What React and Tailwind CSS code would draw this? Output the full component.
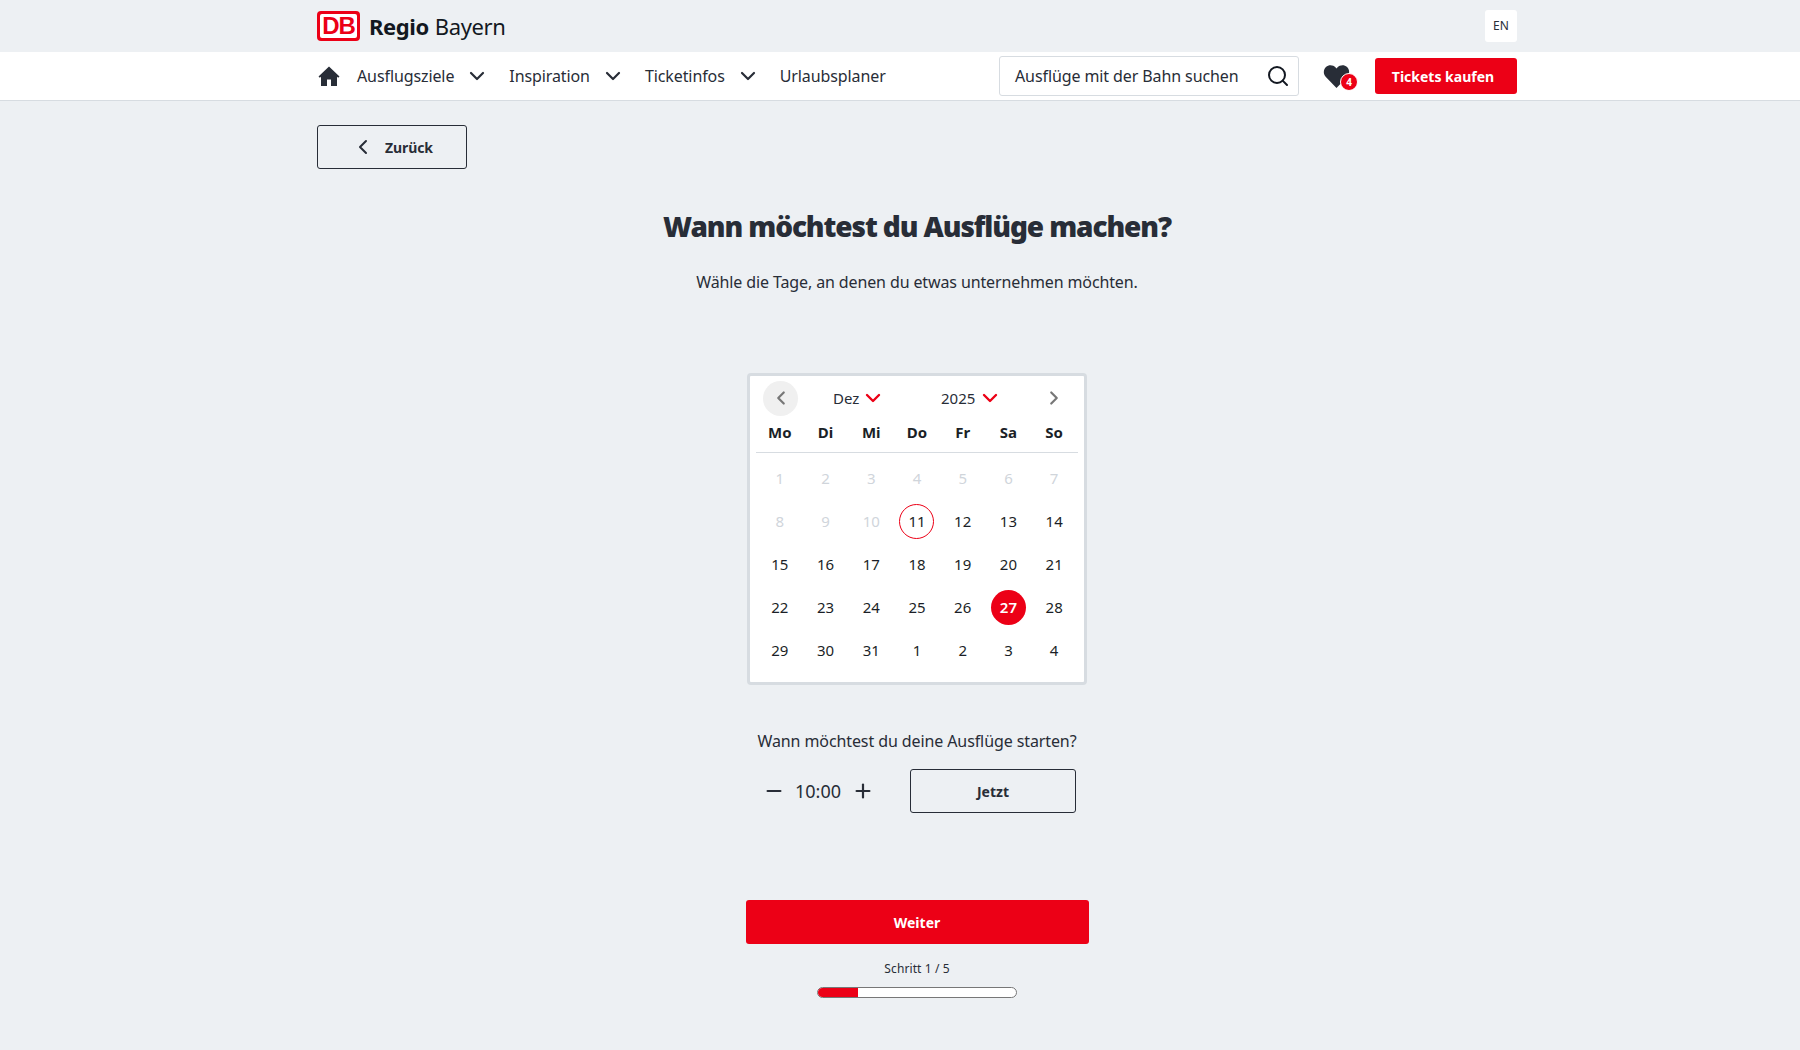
import React from 'react';
import { ChevronLeft, ChevronRight, ChevronDown, Minus, Plus, Search } from 'lucide-react';

const font = "font-['Noto_Sans',sans-serif]";
const weekdays = ['Mo', 'Di', 'Mi', 'Do', 'Fr', 'Sa', 'So'];

const days = [
  [1, 2, 3, 4, 5, 6, 7],
  [8, 9, 10, 11, 12, 13, 14],
  [15, 16, 17, 18, 19, 20, 21],
  [22, 23, 24, 25, 26, 27, 28],
  [29, 30, 31, 1, 2, 3, 4],
];

function DbLogo() {
  return (
    <div className="flex h-[30px] w-[43px] items-center justify-center rounded-[4px] bg-[#ec0016] p-[3px]">
      <div className="flex h-full w-full items-center justify-center rounded-[2px] bg-white">
        <span className="font-['Liberation_Sans',sans-serif] text-[24px] leading-none font-bold tracking-[-1px] text-[#ec0016]">DB</span>
      </div>
    </div>
  );
}

function NavItem({ label, hasMenu }) {
  return (
    <div className="flex items-center">
      <span className="text-[16px] tracking-[-0.1px] text-[#282d37]">{label}</span>
      {hasMenu && <ChevronDown className="ml-[11px] h-[24px] w-[24px] text-[#282d37]" strokeWidth={2.2} />}
    </div>
  );
}

function Calendar() {
  return (
    <div className="h-[312px] w-[340px] rounded-[4px] border-[3px] border-[#d7dce1] bg-white px-[6px] pt-[4px]">
      <div className="flex h-[36px] items-center pl-[7px]">
        <div className="flex h-[35px] w-[35px] items-center justify-center rounded-full bg-[#f0f0f0]">
          <ChevronLeft className="h-[22px] w-[22px] text-[#777]" strokeWidth={2.4} />
        </div>
        <div className="ml-[35px] flex w-[54px] items-center">
          <span className="text-[15px] text-[#282d37]">Dez</span>
          <ChevronDown className="ml-[2px] h-[24px] w-[24px] shrink-0 text-[#ec0016]" strokeWidth={2.4} />
        </div>
        <div className="ml-[54px] flex w-[61px] items-center">
          <span className="text-[15px] text-[#282d37]">2025</span>
          <ChevronDown className="ml-[3px] h-[24px] w-[24px] shrink-0 text-[#ec0016]" strokeWidth={2.4} />
        </div>
        <ChevronRight className="ml-[41px] h-[22px] w-[22px] shrink-0 text-[#777]" strokeWidth={2.4} />
      </div>
      <div className="h-[37px] border-b border-[#d7dce1] px-px pb-[3px]">
        <div className="grid h-full grid-cols-7 items-center">
          {weekdays.map((d) => (
            <div key={d} className="text-center text-[15px] font-bold text-[#1b1f27]">{d}</div>
          ))}
        </div>
      </div>
      <div className="px-px pt-[4px]">
        {days.map((row, r) => (
          <div key={r} className="grid h-[43px] grid-cols-7 items-center">
            {row.map((d, c) => {
              const muted = r === 0 || (r === 1 && c < 3);
              const today = r === 1 && c === 3;
              const picked = r === 3 && c === 5;
              return (
                <div key={c} className="flex justify-center">
                  <div
                    className={`flex h-[35px] w-[35px] items-center justify-center rounded-full text-[15px] ${
                      muted
                        ? 'text-[#d0d5db]'
                        : picked
                          ? 'bg-[#ec0016] font-semibold text-white'
                          : today
                            ? 'border border-[#ec0016] text-[#1b1f27]'
                            : 'text-[#1b1f27]'
                    }`}
                  >
                    {d}
                  </div>
                </div>
              );
            })}
          </div>
        ))}
      </div>
    </div>
  );
}

export default function App() {
  return (
    <div className={`min-h-[1050px] bg-[#edf0f3] ${font}`}>
      <div className="h-[52px]">
        <div className="ml-[317px] flex h-full w-[1200px] items-center justify-between">
          <div className="flex items-center">
            <DbLogo />
            <span className="ml-[9px] text-[22px] leading-none font-bold tracking-[-0.4px] text-[#131821]">Regio</span>
            <span className="ml-[6px] text-[22px] leading-none tracking-[-0.4px] text-[#131821]">Bayern</span>
          </div>
          <div className="flex h-[32px] w-[32px] items-center justify-center rounded-[3px] bg-white text-[12px] text-[#282d37]">EN</div>
        </div>
      </div>

      <div className="h-[49px] border-b border-[#d7dce1] bg-white">
        <div className="ml-[317px] flex h-full w-[1200px] items-center">
          <svg viewBox="0 0 24 24" className="h-[24px] w-[24px] text-[#282d37]" fill="currentColor">
            <path d="M12 2.5 1.5 12.4l1.3 1.4L4 12.7V22h6v-6.5h4V22h6v-9.3l1.2 1.1 1.3-1.4L12 2.5Z" />
          </svg>
          <div className="ml-[16px] flex items-center gap-[20px]">
            <NavItem label="Ausflugsziele" hasMenu />
            <NavItem label="Inspiration" hasMenu />
            <NavItem label="Ticketinfos" hasMenu />
            <NavItem label="Urlaubsplaner" />
          </div>
          <div className="ml-auto flex h-[40px] w-[300px] items-center justify-between rounded-[3px] border border-[#d7dce1] bg-white pr-[8px] pl-[15px]">
            <span className="text-[16px] tracking-[-0.1px] text-[#282d37]">Ausflüge mit der Bahn suchen</span>
            <Search className="h-[24px] w-[24px] text-[#131821]" strokeWidth={2} />
          </div>
          <div className="relative ml-[23px] h-[28px] w-[36px]">
            <svg viewBox="0 0 24 24" className="h-[29px] w-[29px] text-[#282d37]" fill="currentColor">
              <path d="M12 21.5 3.2 12.4C.9 10 1 6.3 3.3 4.1c2.3-2.1 5.9-1.9 8 .5l.7.8.7-.8c2.1-2.4 5.7-2.6 8-.5 2.3 2.2 2.4 5.9.1 8.3L12 21.5Z" />
            </svg>
            <div className="absolute top-[11px] left-[18px] flex h-[18px] w-[18px] items-center justify-center rounded-full border border-white bg-[#ec0016] text-[10px] font-bold text-white">4</div>
          </div>
          <div className="ml-[17px] flex h-[36px] w-[142px] items-center justify-center rounded-[3px] bg-[#ec0016] pr-[6px] text-[14px] font-bold text-white">Tickets kaufen</div>
        </div>
      </div>

      <div className="ml-[317px] flex w-[1200px] flex-col items-center">
        <div className="mt-[24px] flex h-[44px] w-[150px] items-center self-start rounded-[3px] border border-[#282d37] pl-[33px]">
          <ChevronLeft className="h-[24px] w-[24px] text-[#282d37]" strokeWidth={2} />
          <span className="ml-[10px] text-[14px] font-bold tracking-[-0.1px] text-[#282d37]">Zurück</span>
        </div>

        <h1 className="mt-[37px] text-[28px] leading-[40px] font-black tracking-[-1.1px] text-[#282d37]">Wann möchtest du Ausflüge machen?</h1>
        <p className="mt-[24px] text-[16px] leading-[24px] tracking-[-0.12px] text-[#282d37]">Wähle die Tage, an denen du etwas unternehmen möchten.</p>

        <div className="mt-[79px]">
          <Calendar />
        </div>

        <p className="mt-[44px] text-[16px] leading-[24px] tracking-[-0.1px] text-[#282d37]">Wann möchtest du deine Ausflüge starten?</p>

        <div className="mt-[16px] flex w-[318px] items-center">
          <Minus className="ml-[5px] h-[22px] w-[22px] text-[#282d37]" strokeWidth={2.4} />
          <span className="ml-[7px] w-[52px] text-center text-[18px] text-[#282d37]">10:00</span>
          <Plus className="ml-[8px] h-[22px] w-[22px] text-[#282d37]" strokeWidth={2.4} />
          <div className="ml-auto flex h-[44px] w-[166px] items-center justify-center rounded-[3px] border border-[#282d37] text-[14px] font-bold text-[#282d37]">Jetzt</div>
        </div>

        <div className="mt-[87px] flex h-[44px] w-[343px] items-center justify-center rounded-[3px] bg-[#ec0016] text-[14px] font-bold text-white">Weiter</div>

        <p className="mt-[15px] text-[12px] leading-[20px] tracking-[0.1px] text-[#282d37]">Schritt 1 / 5</p>
        <div className="mt-[8px] h-[11px] w-[200px] overflow-hidden rounded-full border border-[#777] bg-white">
          <div className="h-full w-[40px] bg-[#ec0016]" />
        </div>
      </div>
    </div>
  );
}
